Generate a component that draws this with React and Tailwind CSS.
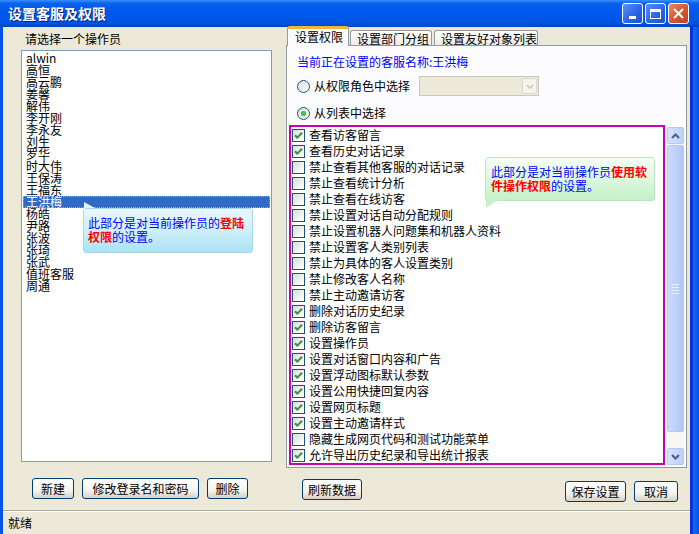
import { useState } from "react";

const operators = [
  "alwin", "高恒", "高云鹏", "姜馨", "解伟", "李开刚", "李永友", "刘生", "罗华", "时大伟",
  "王保涛", "王福东", "王洪梅", "杨皓", "尹路", "张波", "张琦", "张武", "值班客服", "周通",
];

const permissions = [
  { label: "查看访客留言", on: true },
  { label: "查看历史对话记录", on: true },
  { label: "禁止查看其他客服的对话记录", on: false },
  { label: "禁止查看统计分析", on: false },
  { label: "禁止查看在线访客", on: false },
  { label: "禁止设置对话自动分配规则", on: false },
  { label: "禁止设置机器人问题集和机器人资料", on: false },
  { label: "禁止设置客人类别列表", on: false },
  { label: "禁止为具体的客人设置类别", on: false },
  { label: "禁止修改客人名称", on: false },
  { label: "禁止主动邀请访客", on: false },
  { label: "删除对话历史纪录", on: true },
  { label: "删除访客留言", on: true },
  { label: "设置操作员", on: true },
  { label: "设置对话窗口内容和广告", on: true },
  { label: "设置浮动图标默认参数", on: true },
  { label: "设置公用快捷回复内容", on: true },
  { label: "设置网页标题", on: true },
  { label: "设置主动邀请样式", on: true },
  { label: "隐藏生成网页代码和测试功能菜单", on: false },
  { label: "允许导出历史纪录和导出统计报表", on: true },
];

const XpButton = ({ children, className = "" }) => (
  <button
    className={`h-[21px] rounded-[3px] border border-[#003C74] bg-[linear-gradient(to_bottom,#FFFFFF_0%,#F4F3EE_60%,#D6D0C5_100%)] text-[12px] leading-[19px] text-black ${className}`}
  >
    {children}
  </button>
);

const CheckBox = ({ on }) => (
  <span className="w-[13px] h-[13px] border border-[#1C5180] bg-[linear-gradient(135deg,#DCDCD7_0%,#FFFFFF_100%)] flex items-center justify-center shrink-0">
    {on && (
      <svg width="9" height="9" viewBox="0 0 9 9">
        <path d="M1 4.2 L3.3 6.6 L8 1.8" stroke="#21A121" strokeWidth="2" fill="none" />
      </svg>
    )}
  </span>
);

const Radio = ({ on }) => (
  <span className="w-[13px] h-[13px] rounded-full border border-[#1C5180] bg-[linear-gradient(135deg,#DCDCD7_0%,#FFFFFF_100%)] flex items-center justify-center shrink-0">
    {on && <span className="w-[5px] h-[5px] rounded-full bg-[radial-gradient(circle,#55D451_0%,#21A121_100%)]" />}
  </span>
);

const App = () => {
  const [selected] = useState(12);

  return (
    <div className="w-[699px] h-[534px] flex flex-col overflow-hidden font-['Noto_Sans_CJK_SC','Noto_Sans',sans-serif] text-[12px] text-black">
      {/* title bar */}
      <div className="h-[27px] flex items-center pl-[8px] pr-[10px] bg-[linear-gradient(to_bottom,#3D8EFA_0%,#0A62EE_12%,#0058EE_40%,#0054E3_85%,#0045C7_100%)]">
        <span className="text-white font-bold text-[14px] [text-shadow:1px_1px_0_#0A1E7A]">设置客服及权限</span>
        <div className="ml-auto flex gap-[2px]">
          <div className="w-[21px] h-[21px] rounded-[3px] border border-white bg-[linear-gradient(135deg,#5A8FF5_0%,#2A63E6_60%,#1E4FD0_100%)] flex items-end justify-center pb-[4px]">
            <span className="w-[7px] h-[3px] bg-white" />
          </div>
          <div className="w-[21px] h-[21px] rounded-[3px] border border-white bg-[linear-gradient(135deg,#5A8FF5_0%,#2A63E6_60%,#1E4FD0_100%)] flex items-center justify-center">
            <span className="w-[11px] h-[10px] border border-white border-t-[3px]" />
          </div>
          <div className="w-[21px] h-[21px] rounded-[3px] border border-white bg-[linear-gradient(135deg,#E88A6A_0%,#DD5530_50%,#C1401C_100%)] flex items-center justify-center">
            <svg width="11" height="11" viewBox="0 0 11 11">
              <path d="M1 1 L10 10 M10 1 L1 10" stroke="white" strokeWidth="2" />
            </svg>
          </div>
        </div>
      </div>

      <div className="flex flex-1 min-h-0">
        <div className="w-[3px] bg-[#0054E3]" />
        <div className="flex-1 bg-[#ECE9D8] flex flex-col">
          <div className="flex flex-1 min-h-0">
            {/* left column */}
            <div className="w-[283px] pl-[18px] flex flex-col">
              <div className="mt-[6px] h-[12px] leading-[12px] pl-[4px]">请选择一个操作员</div>
              <div className="mt-[5px] w-[251px] h-[412px] border border-[#7F9DB9] bg-white pt-[1px] px-[1px] relative">
                {operators.map((name, i) => (
                  <div
                    key={name}
                    className={`h-[12px] leading-[12px] pl-[3px] ${
                      i === selected ? "bg-[#316AC5] text-white outline-1 outline-dotted outline-[#E0A040] -outline-offset-1" : ""
                    }`}
                  >
                    {name}
                  </div>
                ))}

                {/* tooltip: login permissions */}
                <div className="absolute left-[61px] top-[151px] w-[170px]">
                  <div className="ml-[1px] w-[11px] h-[6px] bg-[#E6F6FC] [clip-path:polygon(0_0,100%_100%,0_100%)]" />
                  <div className="h-[45px] border border-[#A9D8EC] rounded-[3px] bg-[linear-gradient(to_bottom,#EAF8FD_0%,#CBEFFA_55%,#ACE2F5_100%)] px-[4px] pt-[7px] text-[12px] leading-[14px] text-[#0000FF]">
                    此部分是对当前操作员的<span className="text-[#FF0000] font-bold">登陆</span>
                    <br />
                    <span className="text-[#FF0000] font-bold">权限</span>的设置。
                  </div>
                </div>
              </div>
              <div className="mt-[16px] pl-[11px] flex gap-[8px]">
                <XpButton className="w-[42px]">新建</XpButton>
                <XpButton className="w-[117px]">修改登录名和密码</XpButton>
                <XpButton className="w-[41px]">删除</XpButton>
              </div>
            </div>

            {/* right column */}
            <div className="flex-1 flex flex-col">
              <div className="h-[19px] flex items-end pl-[1px]">
                <div className="w-[62px] h-[20px] -mt-px bg-[#FCFCFE] border border-b-0 border-[#919B9C] border-t-[3px] border-t-[#F2B53A] rounded-t-[3px] pl-[7px] leading-[15px] relative z-10">
                  设置权限
                </div>
                <div className="w-[82px] h-[16px] ml-px bg-[linear-gradient(to_bottom,#FFFFFF_0%,#ECEBE6_100%)] border border-b-0 border-[#919B9C] rounded-t-[3px] pl-[6px] leading-[15px]">
                  设置部门分组
                </div>
                <div className="w-[104px] h-[16px] ml-[2px] bg-[linear-gradient(to_bottom,#FFFFFF_0%,#ECEBE6_100%)] border border-b-0 border-[#919B9C] rounded-t-[3px] pl-[6px] leading-[15px]">
                  设置友好对象列表
                </div>
              </div>
              <div className="w-[401px] h-[423px] -mt-px border border-[#919B9C] bg-[#FCFCFE] flex flex-col">
                <div className="ml-[10px] mt-[9px] h-[14px] leading-[14px] text-[#0000FF]">当前正在设置的客服名称:王洪梅</div>
                <div className="mt-[7px] h-[20px] ml-[10px] flex items-center">
                  <Radio on={false} />
                  <span className="ml-[4px]">从权限角色中选择</span>
                  <div className="ml-[9px] w-[120px] h-[20px] border border-[#C9C7BA] bg-[#ECE9D8] flex justify-end items-center pr-[1px]">
                    <div className="w-[15px] h-[16px] bg-[#F4F3EE] border border-[#DCDAD0] rounded-[2px] flex items-center justify-center">
                      <svg width="8" height="5" viewBox="0 0 8 5">
                        <path d="M1 1 L4 4 L7 1" stroke="#C9C7BA" strokeWidth="1.6" fill="none" />
                      </svg>
                    </div>
                  </div>
                </div>
                <div className="mt-[7px] h-[20px] ml-[10px] flex items-center">
                  <Radio on />
                  <span className="ml-[4px]">从列表中选择</span>
                </div>

                <div className="mt-[2px] ml-[2px] flex items-start gap-[2px]">
                  <div className="w-[376px] h-[340px] border-2 border-[#C800B4] bg-white relative">
                    {permissions.map((p) => (
                      <div key={p.label} className="h-[16px] flex items-center pl-[1px] gap-[4px]">
                        <CheckBox on={p.on} />
                        <span className="leading-[16px] whitespace-nowrap">{p.label}</span>
                      </div>
                    ))}

                    {/* tooltip: software permissions */}
                    <div className="absolute left-[194px] top-[30px] w-[170px]">
                      <div className="h-[44px] border border-[#BDE6C0] rounded-[3px] bg-[linear-gradient(to_bottom,#F4FFF4_0%,#DDF8DF_50%,#C4F0C8_100%)] px-[5px] pt-[7px] text-[12px] leading-[14px] text-[#0000FF]">
                        此部分是对当前操作员<span className="text-[#FF0000] font-bold">使用软</span>
                        <br />
                        <span className="text-[#FF0000] font-bold">件操作权限</span>的设置。
                      </div>
                      <div className="ml-[1px] -mt-px w-[12px] h-[8px] bg-[#C8F1CB] [clip-path:polygon(0_0,100%_0,0_100%)]" />
                    </div>
                  </div>

                  {/* scrollbar */}
                  <div className="w-[17px] h-[338px] mt-[2px] bg-[#F7F6F2] flex flex-col">
                    <div className="h-[17px] rounded-[2px] border border-[#B4C8F6] bg-[linear-gradient(to_right,#D6E2FE_0%,#BCD0FA_100%)] flex items-center justify-center">
                      <svg width="9" height="6" viewBox="0 0 9 6">
                        <path d="M1 5 L4.5 1.5 L8 5" stroke="#4D6185" strokeWidth="2" fill="none" />
                      </svg>
                    </div>
                    <div className="mt-px h-[287px] rounded-[2px] border border-[#B4C8F6] bg-[linear-gradient(to_right,#CCDBFE_0%,#BACFFA_60%,#B0C6F6_100%)] flex flex-col items-center justify-center gap-[2px]">
                      <span className="w-[7px] h-px bg-[#EEF4FE]" />
                      <span className="w-[7px] h-px bg-[#EEF4FE]" />
                      <span className="w-[7px] h-px bg-[#EEF4FE]" />
                      <span className="w-[7px] h-px bg-[#EEF4FE]" />
                    </div>
                    <div className="flex-1" />
                    <div className="h-[17px] rounded-[2px] border border-[#B4C8F6] bg-[linear-gradient(to_right,#D6E2FE_0%,#BCD0FA_100%)] flex items-center justify-center">
                      <svg width="9" height="6" viewBox="0 0 9 6">
                        <path d="M1 1 L4.5 4.5 L8 1" stroke="#4D6185" strokeWidth="2" fill="none" />
                      </svg>
                    </div>
                  </div>
                </div>
              </div>
              <div className="mt-[11px] pl-[16px] pr-[12px] flex items-start">
                <XpButton className="w-[60px]">刷新数据</XpButton>
                <div className="ml-auto mt-[2px] flex gap-[8px]">
                  <XpButton className="w-[61px]">保存设置</XpButton>
                  <XpButton className="w-[44px]">取消</XpButton>
                </div>
              </div>
            </div>
          </div>

          {/* status bar */}
          <div className="h-[24px] border-t border-[#ACA899] shadow-[inset_0_1px_0_#FFFFFF] pl-[5px] flex items-center">
            就绪
          </div>
        </div>
        <div className="w-[9px] flex">
          <div className="w-[3px] bg-[#0831D9]" />
          <div className="flex-1 bg-[linear-gradient(to_right,#166AEE,#0054E3)]" />
        </div>
      </div>
    </div>
  );
};

export default App;
